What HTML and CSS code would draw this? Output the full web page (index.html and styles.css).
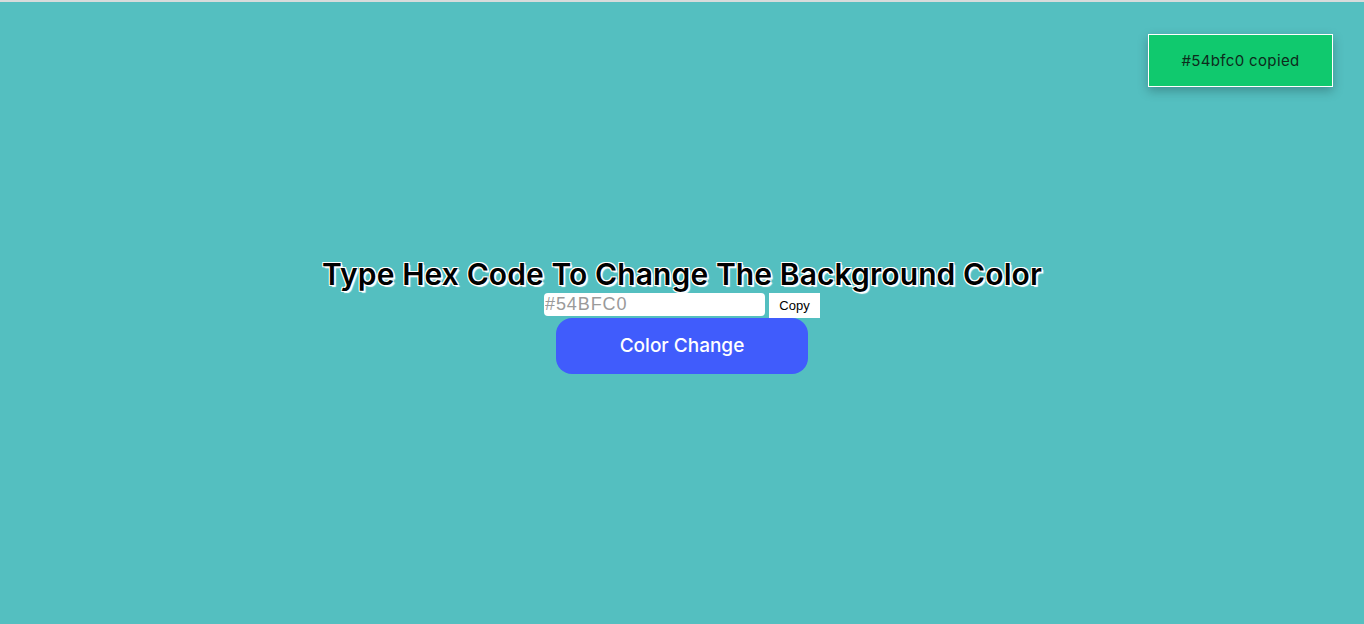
FILE: index.html
```html
<!DOCTYPE html>
<html>
<head>
<meta charset="utf-8">
<link rel="stylesheet" href="styles.css">
</head>
<body>
<div class="topline"></div>
<main class="page">
  <h1 class="title">Type Hex Code To Change The Background Color</h1>
  <div class="row">
    <input class="hex" type="text" placeholder="#54BFC0">
    <button class="copy">Copy</button>
  </div>
  <button class="change">Color Change</button>
</main>
<div class="toast">#54bfc0 copied</div>
</body>
</html>
```

FILE: styles.css
```css
html, body {
  margin: 0;
  padding: 0;
  height: 100%;
}
body {
  background: #54bfc0;
  font-family: Inter, "Noto Sans", sans-serif;
  overflow: hidden;
}
.topline {
  height: 2px;
  background: #d7dbdb;
}
.page {
  height: calc(100% - 2px);
  display: flex;
  flex-direction: column;
  align-items: center;
  justify-content: center;
  padding-top: 3px;
  box-sizing: border-box;
}
.title {
  margin: 0;
  font-size: 30px;
  font-weight: 600;
  line-height: 37px;
  color: #000;
  letter-spacing: 0.1px;
  text-shadow: 1px 1px 0 #fff, -1px -1px 0 #fff, 1px -1px 0 #fff, -1px 1px 0 #fff, 2px 2px 1px #fff;
}
.row {
  display: flex;
  align-items: flex-start;
  gap: 4px;
  height: 25px;
}
.hex {
  width: 221px;
  height: 23px;
  box-sizing: border-box;
  border: none;
  border-radius: 4px;
  padding: 0 1px;
  font-family: "Liberation Sans", Arial, sans-serif;
  font-size: 18px;
  outline: none;
  background: #fff;
}
.hex::placeholder {
  color: #9a9a9a;
  letter-spacing: 0.9px;
}
.copy {
  width: 51px;
  height: 25px;
  border: none;
  background: #fff;
  font-family: "Liberation Sans", Arial, sans-serif;
  font-size: 13px;
  color: #000;
  padding: 0;
  padding-top: 1px;
}
.change {
  width: 252px;
  height: 56px;
  border: none;
  border-radius: 16px;
  background: #405cfc;
  color: #fff;
  font-family: Inter, "Noto Sans", sans-serif;
  font-size: 19px;
  font-weight: 500;
}
.toast {
  position: absolute;
  top: 34px;
  right: 31px;
  width: 185px;
  height: 53px;
  box-sizing: border-box;
  border: 1px solid #fff;
  background: #10c96e;
  color: #0d2b1c;
  font-size: 15px;
  letter-spacing: 0.35px;
  display: flex;
  align-items: center;
  justify-content: center;
  box-shadow: 0 4px 10px rgba(0,0,0,0.25);
}
```
